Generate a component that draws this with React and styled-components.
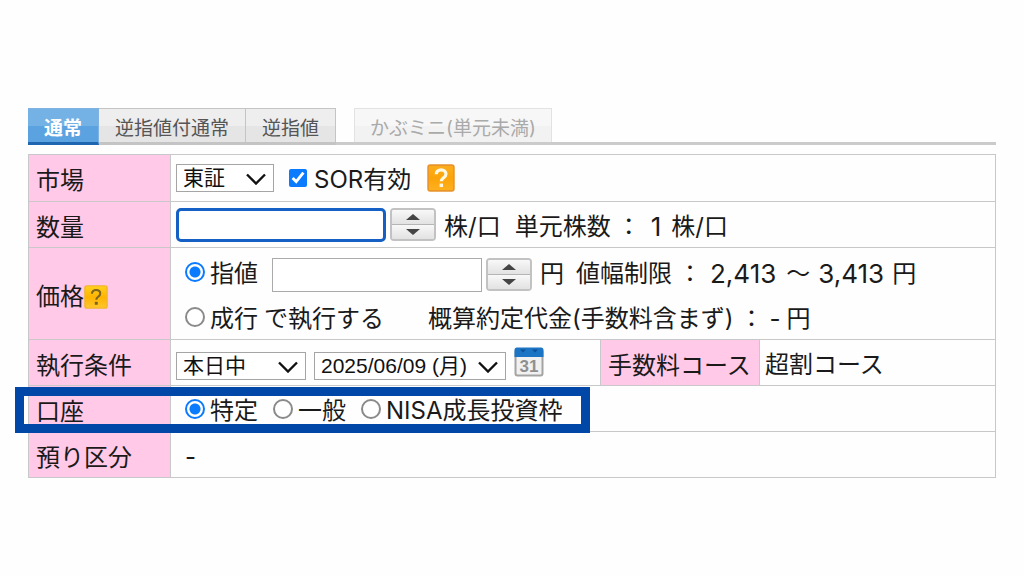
import React, { useState } from 'react'
import styled, { createGlobalStyle, css } from 'styled-components'

const lineColor = '#c8c8c8'
const accentBlue = '#0a7aff'

function QuestionIcon({ size, dark }) {
  return (
    <svg width={size} height={size} viewBox="0 0 26 26" aria-hidden="true">
      <defs>
        <linearGradient id={dark ? 'helpDark' : 'helpLight'} x1="0" y1="0" x2="0" y2="1">
          <stop offset="0" stopColor={dark ? '#ffd21f' : '#fcae1e'} />
          <stop offset="0.5" stopColor={dark ? '#ffb400' : '#fba409'} />
          <stop offset="1" stopColor={dark ? '#ffc62e' : '#ffb020'} />
        </linearGradient>
      </defs>
      <rect
        x="1"
        y="1"
        width="24"
        height="24"
        rx="2"
        fill={`url(#${dark ? 'helpDark' : 'helpLight'})`}
        stroke={dark ? '#f3b52a' : '#e8942a'}
        strokeWidth="1.5"
      />
      <path
        d="M8.6 9.6c0-2.6 1.9-4.2 4.5-4.2s4.5 1.5 4.5 3.9c0 3.5-4.3 3.4-4.3 6.7"
        fill="none"
        stroke={dark ? '#7d6420' : '#fff8e0'}
        strokeWidth={dark ? 2.3 : 3}
      />
      <rect x="11.7" y="18.2" width="3.2" height="3.2" fill={dark ? '#7d6420' : '#fff8e0'} />
    </svg>
  )
}

function CalendarIcon() {
  return (
    <svg width="30" height="30" viewBox="0 0 30 30" aria-hidden="true">
      <rect x="1.5" y="3" width="27" height="25.5" rx="2" fill="#f1f1f1" stroke="#a3a3a3" strokeWidth="2" />
      <path d="M0.5 10V3a2.5 2.5 0 0 1 2.5-2.5h24a2.5 2.5 0 0 1 2.5 2.5v7z" fill="#1c74c4" />
      <path d="M6 2.5l3 3 3-3zM18 2.5l3 3 3-3z" fill="#0d5299" />
      <text
        x="15"
        y="25"
        textAnchor="middle"
        fontFamily="Liberation Sans, sans-serif"
        fontSize="17"
        fontWeight="700"
        fill="#8f8f8f"
      >
        31
      </text>
    </svg>
  )
}

function Stepper({ label, onStep }) {
  return (
    <StepperBox>
      <StepButton type="button" aria-label={`${label}を増やす`} onClick={() => onStep(1)}>
        <svg width="14" height="6" viewBox="0 0 14 6">
          <path d="M7 0l7 6H0z" fill="#444" />
        </svg>
      </StepButton>
      <StepButton type="button" aria-label={`${label}を減らす`} onClick={() => onStep(-1)}>
        <svg width="14" height="6" viewBox="0 0 14 6">
          <path d="M7 6l7-6H0z" fill="#444" />
        </svg>
      </StepButton>
    </StepperBox>
  )
}

function Dropdown({ label, width, options }) {
  return (
    <SelectBox $width={width}>
      <Select aria-label={label}>
        {options.map((option) => (
          <option key={option}>{option}</option>
        ))}
      </Select>
      <Chevron width="20" height="12" viewBox="0 0 20 12">
        <path d="M1 1.5l9 9 9-9" fill="none" stroke="#111" strokeWidth="2.4" />
      </Chevron>
    </SelectBox>
  )
}

const tabs = ['通常', '逆指値付通常', '逆指値']
const accounts = ['特定', '一般', 'NISA成長投資枠']

function App() {
  const [tab, setTab] = useState('通常')
  const [sor, setSor] = useState(true)
  const [quantity, setQuantity] = useState('')
  const [price, setPrice] = useState('')
  const [priceType, setPriceType] = useState('limit')
  const [account, setAccount] = useState('特定')

  const step = (setter) => (delta) =>
    setter((value) => String(Math.max(0, Number(value) + delta)))

  return (
    <Page>
      <GlobalStyle />
      <Tabs>
        {tabs.map((name) => (
          <Tab key={name} type="button" $active={tab === name} onClick={() => setTab(name)}>
            {name}
          </Tab>
        ))}
        <MiniTab type="button" disabled>
          かぶミニ(単元未満)
        </MiniTab>
      </Tabs>

      <OrderTable>
        <colgroup>
          <LabelCol />
          <col />
          <CourseCol />
          <CourseValueCol />
        </colgroup>
        <tbody>
          <Row>
            <Head scope="row">市場</Head>
            <Cell colSpan={3}>
              <Line $height={46}>
                <Dropdown label="市場" width={98} options={['東証', '名証']} />
                <CheckLabel>
                  <Checkbox checked={sor} onChange={(e) => setSor(e.target.checked)} />
                  <Text>SOR有効</Text>
                </CheckLabel>
                <IconButton type="button" aria-label="SORのヘルプ">
                  <QuestionIcon size={28} />
                </IconButton>
              </Line>
            </Cell>
          </Row>
          <Row>
            <Head scope="row">
              <label htmlFor="quantity">数量</label>
            </Head>
            <Cell colSpan={3}>
              <Line>
                <InputGroup>
                  <NumberInput
                    id="quantity"
                    $focused
                    value={quantity}
                    onChange={(e) => setQuantity(e.target.value)}
                  />
                  <Stepper label="数量" onStep={step(setQuantity)} />
                </InputGroup>
                <Text $start={2}>株/口</Text>
                <Text $start={8}>単元株数</Text>
                <Text>：</Text>
                <Figure $start={4}>1</Figure>
                <Text $start={4}>株/口</Text>
              </Line>
            </Cell>
          </Row>
          <Row>
            <Head scope="row">
              <HeadContent>
                価格
                <IconButton type="button" aria-label="価格のヘルプ">
                  <QuestionIcon size={24} dark />
                </IconButton>
              </HeadContent>
            </Head>
            <PriceCell colSpan={3}>
              <Line $height={45} $indent>
                <RadioLabel>
                  <Radio
                    name="priceType"
                    checked={priceType === 'limit'}
                    onChange={() => setPriceType('limit')}
                  />
                  <Text>指値</Text>
                </RadioLabel>
                <InputGroup $start={8} $low>
                  <NumberInput
                    aria-label="指値価格"
                    value={price}
                    onChange={(e) => setPrice(e.target.value)}
                  />
                  <Stepper label="価格" onStep={step(setPrice)} />
                </InputGroup>
                <Text $start={2}>円</Text>
                <Text $start={6}>値幅制限</Text>
                <Text>：</Text>
                <Figure $start={2}>2,413</Figure>
                <Text $start={4}>～</Text>
                <Figure $start={2}>3,413</Figure>
                <Text $start={2}>円</Text>
              </Line>
              <Line $height={45} $indent>
                <RadioLabel>
                  <Radio
                    name="priceType"
                    checked={priceType === 'market'}
                    onChange={() => setPriceType('market')}
                  />
                  <Text>成行</Text>
                </RadioLabel>
                <Text>で執行する</Text>
                <Text $start={38}>概算約定代金(手数料含まず)</Text>
                <Text>：</Text>
                <Text>-</Text>
                <Text>円</Text>
              </Line>
            </PriceCell>
          </Row>
          <Row>
            <Head scope="row">執行条件</Head>
            <Cell>
              <TermLine>
                <Dropdown label="執行条件" width={130} options={['本日中', '今週中', '期間指定']} />
                <Dropdown label="有効期限" width={192} options={['2025/06/09 (月)', '2025/06/10 (火)']} />
                <CalendarButton type="button" aria-label="カレンダー">
                  <CalendarIcon />
                </CalendarButton>
              </TermLine>
            </Cell>
            <Head scope="row">手数料コース</Head>
            <Cell>
              <Line>
                <Text>超割コース</Text>
              </Line>
            </Cell>
          </Row>
          <Row $marked>
            <Head scope="row">
              口座
              <Highlight />
            </Head>
            <Cell colSpan={3}>
              <Line $indent $gap={15}>
                {accounts.map((name) => (
                  <RadioLabel key={name}>
                    <Radio
                      name="account"
                      checked={account === name}
                      onChange={() => setAccount(name)}
                    />
                    <Text>{name}</Text>
                  </RadioLabel>
                ))}
              </Line>
            </Cell>
          </Row>
          <Row>
            <Head scope="row">預り区分</Head>
            <Cell colSpan={3}>
              <Line $indent>
                <Text>-</Text>
              </Line>
            </Cell>
          </Row>
        </tbody>
      </OrderTable>
    </Page>
  )
}

const GlobalStyle = createGlobalStyle`
  * {
    box-sizing: border-box;
  }

  body {
    margin: 0;
    background: #fefefe;
    color: #1a1a1a;
  }

  body, button, input, select {
    font-family: Inter, 'Noto Sans CJK JP', sans-serif;
  }
`

const Page = styled.main`
  padding: 108px 28px 0;
`

const Tabs = styled.nav`
  display: flex;
  height: 37px;
  border-bottom: 3px solid #cbcbcb;
`

const Tab = styled.button`
  height: 37px;
  padding: 6px 16px 0;
  border: 1px solid #c4c4c4;
  border-left-width: 0;
  border-bottom: 3px solid #c4c4c4;
  background: linear-gradient(#eeeeee 50%, #e5e5e5 50%);
  color: #555;
  font-size: 19px;
  line-height: 26px;
  white-space: nowrap;
  cursor: pointer;

  ${({ $active }) =>
    $active &&
    css`
      border-color: #7fb2e0;
      border-bottom-color: #1f66b0;
      background: linear-gradient(#74b2e6 50%, #5ba3e0 50%);
      color: white;
      font-weight: 700;
    `}
`

const MiniTab = styled(Tab)`
  height: 34px;
  margin-left: 18px;
  padding: 6px 15px 0;
  border: 1px solid #e2e2e2;
  border-bottom: 0;
  background: linear-gradient(#f7f7f7 50%, #f2f2f2 50%);
  color: #aaa;
  cursor: default;
`

const OrderTable = styled.table`
  width: 100%;
  margin-top: 9px;
  border-collapse: collapse;
  table-layout: fixed;
  font-size: 24px;
  line-height: 36px;
`

const LabelCol = styled.col`
  width: 142px;
`

const CourseCol = styled.col`
  width: 159px;
`

const CourseValueCol = styled.col`
  width: 236px;
`

const Row = styled.tr`
  height: 46px;
  position: ${({ $marked }) => ($marked ? 'relative' : 'static')};
`

const Head = styled.th`
  padding: 6px 0 0 7px;
  border: 1px solid ${lineColor};
  background: #ffc9e7;
  font-weight: 400;
  text-align: left;
  white-space: nowrap;
`

const HeadContent = styled.div`
  display: flex;
  align-items: center;
`

const Cell = styled.td`
  padding: 0 0 0 5px;
  border: 1px solid ${lineColor};
  white-space: nowrap;
`

const PriceCell = styled(Cell)`
  padding-top: 1px;
`

const Line = styled.div`
  display: flex;
  align-items: center;
  gap: ${({ $gap = 6 }) => $gap}px;
  height: ${({ $height = 44 }) => $height}px;
  padding-left: ${({ $indent }) => ($indent ? '9px' : '0')};
`

const TermLine = styled(Line)`
  gap: 8px;
  padding-top: 6px;
`

const Text = styled.span`
  margin-left: ${({ $start = 0 }) => $start}px;
  padding-top: 4px;
`

const Figure = styled(Text)`
  font-size: 26px;
`

const InputGroup = styled.div`
  display: flex;
  align-items: center;
  gap: 4px;
  margin-left: ${({ $start = 0 }) => $start}px;
  padding-top: ${({ $low }) => ($low ? '6px' : '0')};
`

const NumberInput = styled.input.attrs({ type: 'text', inputMode: 'numeric' })`
  width: 210px;
  height: 34px;
  padding: 0 8px;
  border: 1px solid #aaa;
  background: white;
  font-size: 21px;
  outline: none;

  ${({ $focused }) =>
    $focused &&
    css`
      border: 3px solid #1560c4;
      border-radius: 5px;
    `}
`

const StepperBox = styled.div`
  display: flex;
  flex-direction: column;
  width: 46px;
  height: 33px;
  border: 2px solid #c2c2c2;
  border-radius: 4px;
  overflow: hidden;
`

const StepButton = styled.button`
  display: flex;
  flex: 1;
  align-items: center;
  justify-content: center;
  padding: 0;
  border: 0;
  background: linear-gradient(#f8f8f8, #e2e2e2);
  cursor: pointer;

  & + & {
    border-top: 1px solid #b5b5b5;
  }
`

const SelectBox = styled.div`
  position: relative;
  width: ${({ $width }) => $width}px;
`

const Select = styled.select`
  display: block;
  width: 100%;
  height: 28px;
  padding: 0 6px;
  appearance: none;
  border: 1px solid #a5a5a5;
  border-radius: 0;
  background: white;
  color: #111;
  font-family: 'Liberation Sans', 'Noto Sans CJK JP', sans-serif;
  font-size: 21px;
  line-height: 26px;
`

const Chevron = styled.svg`
  position: absolute;
  top: 9px;
  right: 8px;
  pointer-events: none;
`

const CheckLabel = styled.label`
  display: flex;
  align-items: center;
  gap: 7px;
  margin: 0 10px 0 9px;
`

const Checkbox = styled.input.attrs({ type: 'checkbox' })`
  width: 18px;
  height: 18px;
  margin: 0;
  accent-color: ${accentBlue};
`

const RadioLabel = styled.label`
  display: flex;
  align-items: center;
  gap: 5px;
`

const Radio = styled.input.attrs({ type: 'radio' })`
  width: 20px;
  height: 20px;
  margin: 0;
  appearance: none;
  border: 2px solid #8a8a8a;
  border-radius: 50%;
  background: white;

  &:checked {
    border-color: ${accentBlue};
    background: radial-gradient(circle, ${accentBlue} 5px, white 6px);
  }
`

const IconButton = styled.button`
  display: flex;
  padding: 0;
  border: 0;
  background: none;
  cursor: pointer;
`

const CalendarButton = styled(IconButton)`
  align-self: flex-start;
`

const Highlight = styled.span`
  position: absolute;
  top: 1px;
  left: -14px;
  width: 59.5%;
  height: 46px;
  border: 9px solid #0047a8;
  pointer-events: none;
`

export default App
